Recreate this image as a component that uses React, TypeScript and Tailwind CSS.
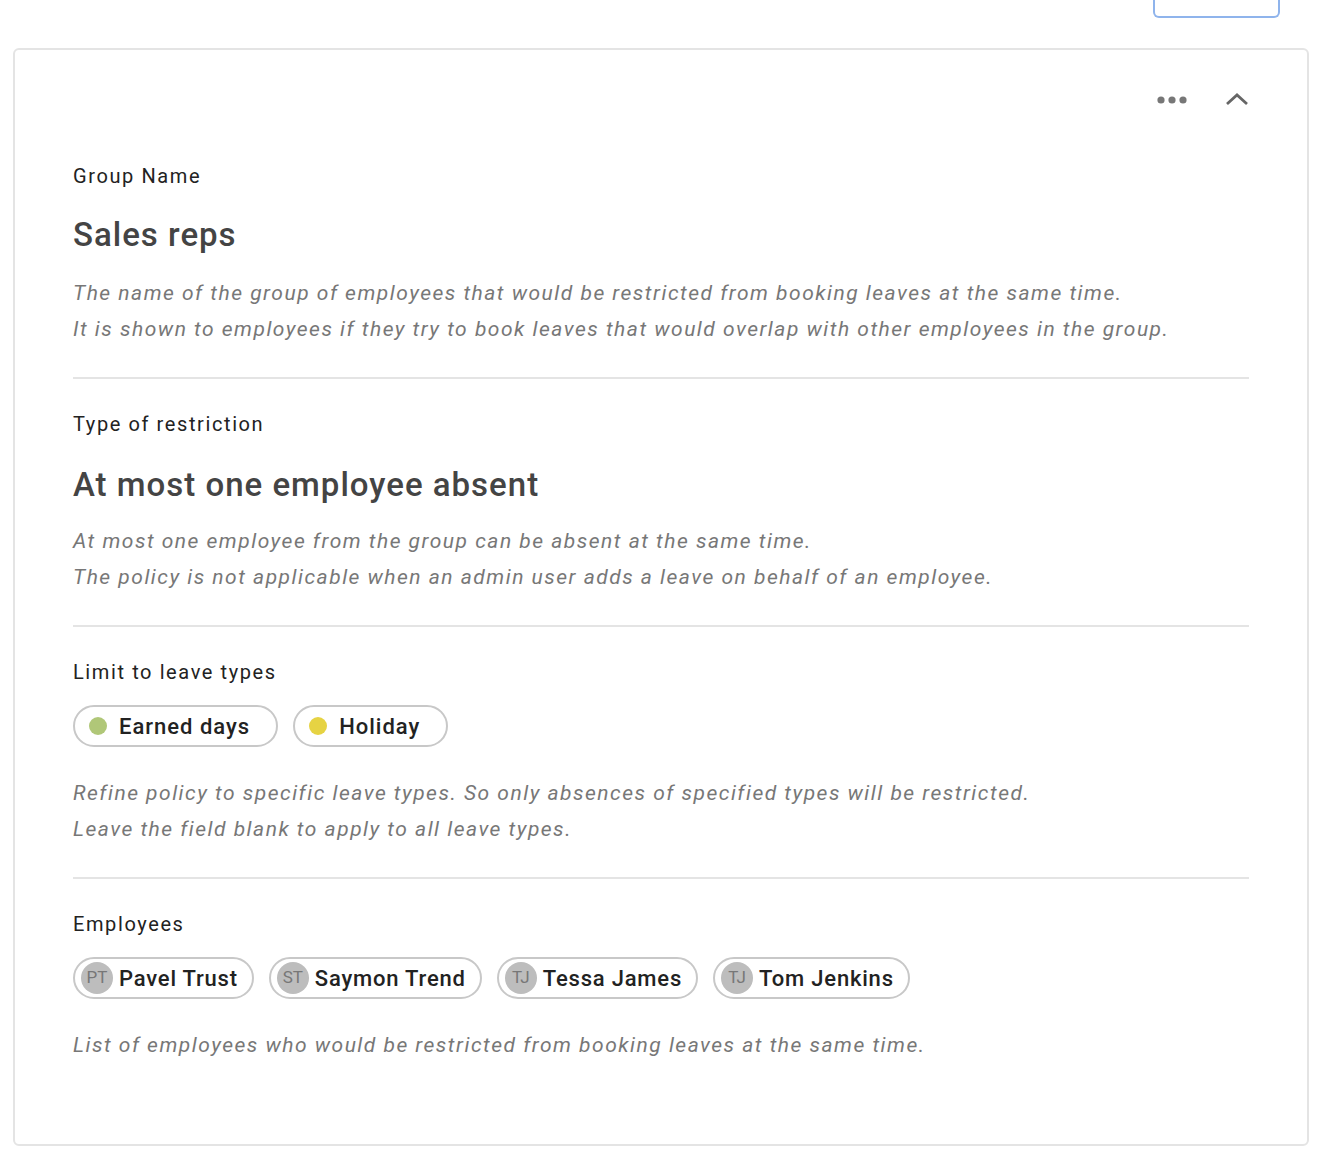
const font = { fontFamily: "Roboto, 'Liberation Sans', sans-serif" };

function Chip({ children, lead }: { children: React.ReactNode; lead: React.ReactNode }) {
  return (
    <div className="flex h-[42px] items-center gap-[12px] rounded-full border-2 border-[#c8c8c8] pl-[14px] pr-[26px] text-[22px] font-medium tracking-[1px] text-[#222]">
      {lead}
      <span>{children}</span>
    </div>
  );
}

function Avatar({ initials }: { initials: string }) {
  return (
    <span className="-ml-[8px] -mr-[2px] flex h-[32px] w-[32px] items-center justify-center rounded-full bg-[#bdbdbd] text-[17px] font-normal tracking-normal text-[#777]">
      {initials}
    </span>
  );
}

function Section({ label, children, desc, last }: { label: string; children: React.ReactNode; desc: string[]; last?: boolean }) {
  return (
    <div className={last ? "pt-[30px]" : "border-b-2 border-[#e4e4e4] pb-[30px] pt-[30px]"}>
      <div className="text-[20px] tracking-[1.6px] text-[#222]">{label}</div>
      {children}
      <div className="text-[21px] italic leading-[36px] tracking-[1.5px] text-[#777]">
        {desc.map((d) => <div key={d}>{d}</div>)}
      </div>
    </div>
  );
}

export default function App() {
  return (
    <div className="min-h-[1174px] bg-white" style={font}>
      <div className="flex justify-end pr-[46px]">
        <div className="-mt-[10px] h-[28px] w-[127px] rounded-b-[6px] border-2 border-t-0 border-[#8fb4ec]" />
      </div>
      <div className="ml-[13px] mr-[17px] mt-[30px] h-[1098px] rounded-[6px] border-2 border-[#e4e4e4] px-[58px]">
        <div className="flex h-[81px] items-start justify-end gap-[38px] pr-[-2px] pt-[46px]">
          <svg width="30" height="8" viewBox="0 0 30 8" fill="#777"><circle cx="4" cy="4" r="3.6" /><circle cx="15" cy="4" r="3.6" /><circle cx="26" cy="4" r="3.6" /></svg>
          <svg width="24" height="14" viewBox="0 0 24 14" fill="none" stroke="#666" strokeWidth="2.8" className="-mt-[4px]"><path d="M2 12L12 3l10 9" /></svg>
        </div>
        <Section label="Group Name" desc={["The name of the group of employees that would be restricted from booking leaves at the same time.", "It is shown to employees if they try to book leaves that would overlap with other employees in the group."]}>
          <div className="mb-[20px] mt-[24px] text-[33px] font-medium leading-[40px] tracking-[1px] text-[#444]">Sales reps</div>
        </Section>
        <Section label="Type of restriction" desc={["At most one employee from the group can be absent at the same time.", "The policy is not applicable when an admin user adds a leave on behalf of an employee."]}>
          <div className="mb-[18px] mt-[26px] text-[33px] font-medium leading-[40px] tracking-[1px] text-[#444]">At most one employee absent</div>
        </Section>
        <Section label="Limit to leave types" desc={["Refine policy to specific leave types. So only absences of specified types will be restricted.", "Leave the field blank to apply to all leave types."]}>
          <div className="mb-[28px] mt-[18px] flex gap-[15px]">
            <Chip lead={<span className="h-[18px] w-[18px] rounded-full bg-[#b0c778]" />}>Earned days</Chip>
            <Chip lead={<span className="h-[18px] w-[18px] rounded-full bg-[#e6d343]" />}>Holiday</Chip>
          </div>
        </Section>
        <Section last label="Employees" desc={["List of employees who would be restricted from booking leaves at the same time."]}>
          <div className="mb-[28px] mt-[18px] flex gap-[15px]">
            {[["PT", "Pavel Trust"], ["ST", "Saymon Trend"], ["TJ", "Tessa James"], ["TJ", "Tom Jenkins"]].map(([i, n]) => (
              <div key={n} className="flex h-[42px] items-center gap-[8px] rounded-full border-2 border-[#c8c8c8] pl-[14px] pr-[14px] text-[22px] font-medium tracking-[0.8px] text-[#222]">
                <Avatar initials={i} />
                <span>{n}</span>
              </div>
            ))}
          </div>
        </Section>
      </div>
    </div>
  );
}
